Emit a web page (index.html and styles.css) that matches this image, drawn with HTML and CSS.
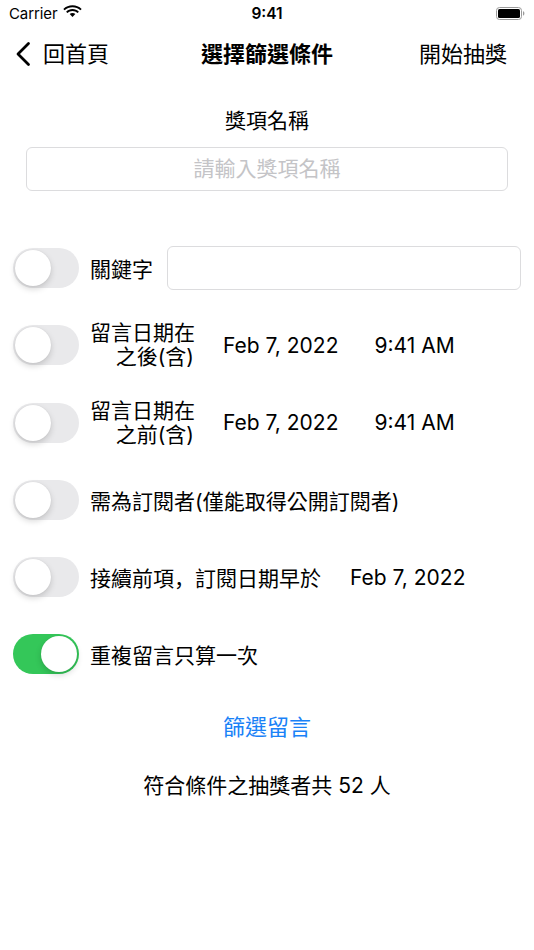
FILE: index.html
```html
<!DOCTYPE html>
<html lang="zh-Hant">
<head>
<meta charset="utf-8">
<title>選擇篩選條件</title>
<link rel="stylesheet" href="styles.css">
</head>
<body>
<div class="screen">
  <div class="status">
    <div class="status-left">
      <span class="carrier">Carrier</span>
      <svg class="wifi" width="19" height="14" viewBox="0 0 19 14">
        <path d="M9.5 2.2c3 0 5.8 1.1 7.9 3.1l1.3-1.4C16.2 1.5 12.9.2 9.5.2S2.8 1.5.3 3.9l1.3 1.4c2.1-2 4.9-3.1 7.9-3.1z" fill="#000"/>
        <path d="M9.5 6.1c1.9 0 3.7.7 5.1 2l1.3-1.4C14.2 5 11.9 4.1 9.5 4.1S4.8 5 3.1 6.7l1.3 1.4c1.4-1.3 3.2-2 5.1-2z" fill="#000"/>
        <path d="M9.5 8c1.1 0 2.1.4 2.8 1.1L9.5 12 6.7 9.1C7.4 8.4 8.4 8 9.5 8z" fill="#000"/>
      </svg>
    </div>
    <div class="clock">9:41</div>
    <div class="status-right">
      <svg class="battery" width="29" height="13" viewBox="0 0 29 13">
        <rect x="0.5" y="0.5" width="25" height="12" rx="3" ry="3" fill="none" stroke="#9a9a9a" stroke-width="1"/>
        <rect x="2" y="2" width="22" height="9" rx="1.6" ry="1.6" fill="#000"/>
        <path d="M27 4.3v4.4c.9-.3 1.4-1.2 1.4-2.2S27.9 4.6 27 4.3z" fill="#9a9a9a"/>
      </svg>
    </div>
  </div>

  <div class="nav">
    <div class="nav-back">
      <svg class="chevron" width="17" height="26" viewBox="0 0 17 26">
        <path d="M14.5 2.5L4 13l10.5 10.5" fill="none" stroke="#000" stroke-width="2.8" stroke-linecap="round" stroke-linejoin="round"/>
      </svg>
      <span>回首頁</span>
    </div>
    <div class="nav-title">選擇篩選條件</div>
    <div class="nav-action">開始抽獎</div>
  </div>

  <div class="prize">
    <div class="prize-label">獎項名稱</div>
    <div class="field prize-field"><span class="placeholder">請輸入獎項名稱</span></div>
  </div>

  <div class="filters">
    <div class="row">
      <div class="switch"></div>
      <span class="label">關鍵字</span>
      <div class="field keyword-field"></div>
    </div>
    <div class="row">
      <div class="switch"></div>
      <div class="label two-line">留言日期在<br>之後(含)</div>
      <span class="date">Feb 7, 2022</span>
      <span class="time">9:41 AM</span>
    </div>
    <div class="row">
      <div class="switch"></div>
      <div class="label two-line">留言日期在<br>之前(含)</div>
      <span class="date">Feb 7, 2022</span>
      <span class="time">9:41 AM</span>
    </div>
    <div class="row">
      <div class="switch"></div>
      <span class="label">需為訂閱者(僅能取得公開訂閱者)</span>
    </div>
    <div class="row">
      <div class="switch"></div>
      <span class="label">接續前項<span class="punct" lang="zh-Hans">，</span>訂閱日期早於</span>
      <span class="date sub-date">Feb 7, 2022</span>
    </div>
    <div class="row">
      <div class="switch on"></div>
      <span class="label">重複留言只算一次</span>
    </div>
  </div>

  <div class="filter-btn">篩選留言</div>
  <div class="result">符合條件之抽獎者共 52 人</div>
</div>
</body>
</html>
```

FILE: styles.css
```css
html, body {
  margin: 0;
  padding: 0;
  background: #fff;
}
body {
  font-family: "Inter", "Noto Sans CJK TC", sans-serif;
  color: #000;
}
.screen {
  width: 534px;
  height: 950px;
  overflow: hidden;
}
.status {
  height: 26px;
  display: grid;
  grid-template-columns: 1fr auto 1fr;
  align-items: center;
}
.status-left {
  display: flex;
  align-items: center;
  padding-left: 9px;
  gap: 6px;
}
.carrier {
  font-size: 15px;
  letter-spacing: -0.1px;
}
.wifi {
  display: block;
  margin-top: -2px;
}
.clock {
  font-size: 15.5px;
  font-weight: 600;
  text-align: center;
}
.status-right {
  display: flex;
  justify-content: flex-end;
  padding-right: 9px;
}
.battery {
  display: block;
}
.nav {
  height: 57px;
  box-sizing: border-box;
  padding-bottom: 5px;
  display: grid;
  grid-template-columns: 1fr auto 1fr;
  align-items: center;
  font-size: 22px;
}
.nav-back {
  display: flex;
  align-items: center;
  padding-left: 14px;
  gap: 12px;
}
.chevron {
  display: block;
  margin-top: 3px;
}
.nav-title {
  font-weight: 700;
  text-align: center;
}
.nav-action {
  text-align: right;
  padding-right: 27px;
}
.prize {
  padding: 25px 26px 0;
  text-align: center;
}
.prize-label {
  font-size: 21px;
  line-height: 26px;
}
.field {
  border: 1px solid #dcdcde;
  border-radius: 6px;
  box-sizing: border-box;
}
.prize-field {
  margin-top: 13px;
  height: 44px;
  padding-bottom: 4px;
  display: flex;
  align-items: center;
  justify-content: center;
}
.placeholder {
  color: #c4c4c7;
  font-size: 21px;
}
.filters {
  margin-top: 53px;
  display: flex;
  flex-direction: column;
  gap: 29.3px;
  padding: 0 13px;
}
.row {
  height: 48px;
  display: flex;
  align-items: center;
  font-size: 21px;
}
.switch {
  position: relative;
  flex: none;
  width: 66px;
  height: 40px;
  border-radius: 20px;
  background: #e9e9eb;
  margin-right: 11px;
}
.switch::after {
  content: "";
  position: absolute;
  top: 2px;
  left: 2px;
  width: 36px;
  height: 36px;
  border-radius: 50%;
  background: #fff;
  box-shadow: 0 3px 6px rgba(0, 0, 0, 0.16), 0 0 1px rgba(0, 0, 0, 0.12);
}
.switch.on {
  background: #34c759;
}
.switch.on::after {
  left: 28px;
}
.label {
  white-space: nowrap;
}
.two-line {
  width: 104px;
  text-align: right;
  line-height: 24px;
}
.punct {
  font-family: "Noto Sans CJK SC", sans-serif;
}
.keyword-field {
  flex: 1;
  height: 44px;
  margin-left: 14px;
}
.date {
  margin-left: 29px;
  white-space: nowrap;
}
.time {
  margin-left: 36px;
  white-space: nowrap;
}
.sub-date {
  margin-left: 29px;
}
.filter-btn {
  margin-top: 36px;
  text-align: center;
  color: #1a82f7;
  font-size: 22px;
  line-height: 26px;
}
.result {
  margin-top: 33px;
  text-align: center;
  font-size: 21px;
  line-height: 26px;
}
```
